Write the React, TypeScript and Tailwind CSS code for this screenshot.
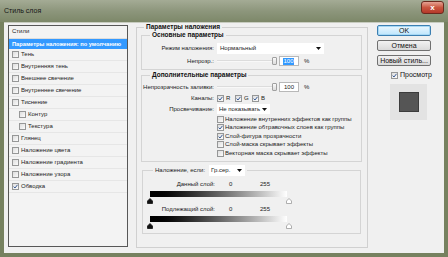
import React from "react";

function Cb({ checked }: { checked?: boolean }) {
  return (
    <span className="inline-flex w-[7px] h-[7px] shrink-0 border border-[#969797] bg-linear-to-br from-[#dedede] to-[#fbfbfb] items-center justify-center">
      {checked && (
        <svg viewBox="0 0 5 5" className="w-[5px] h-[5px]">
          <path d="M0.6 2.6 L2 4 L4.5 0.8" stroke="#3a5c96" strokeWidth="1" fill="none" />
        </svg>
      )}
    </span>
  );
}

function ListItem({ label, checked, indent }: { label: string; checked?: boolean; indent?: boolean }) {
  return (
    <div className={"flex items-center h-[12px] border-b border-[#e6e6e6] gap-[2px] " + (indent ? "pl-[10px]" : "pl-[3px]")}>
      <Cb checked={checked} />
      <span className="text-[6px] leading-[7px] text-[#222]">{label}</span>
    </div>
  );
}

function Arrow() {
  return (
    <svg viewBox="0 0 5 3" className="w-[5px] h-[3px]">
      <path d="M0 0 L5 0 L2.5 3 Z" fill="#111" />
    </svg>
  );
}

function Slider() {
  return (
    <div className="flex items-center">
      <div className="w-[55px] h-[2px] bg-[#dcdcdc] border-b border-[#f8f8f8]" />
      <div className="w-[5px] h-[8px] border border-[#a0a0a0] rounded-[1px] bg-linear-to-b from-[#fafafa] to-[#dcdcdc]" />
    </div>
  );
}

function House({ dark }: { dark?: boolean }) {
  return (
    <svg viewBox="0 0 6 6" className="w-[6px] h-[6px]">
      <path
        d="M3 0.5 L5.5 3 L5.5 5.5 L0.5 5.5 L0.5 3 Z"
        fill={dark ? "#111" : "#fff"}
        stroke={dark ? "#111" : "#9a9a9a"}
        strokeWidth="0.8"
      />
    </svg>
  );
}

function Btn({ children, def }: { children: React.ReactNode; def?: boolean }) {
  return (
    <div
      className={
        "h-[11px] flex items-center justify-center rounded-[2px] border text-[7px] leading-[8px] text-[#111] bg-linear-to-b " +
        (def
          ? "border-[#3c7fb1] from-[#eaf6fd] to-[#bee6fd] shadow-[inset_0_0_0_1px_#a6d8f5]"
          : "border-[#707070] from-[#f2f2f2] to-[#dadada]")
      }
    >
      {children}
    </div>
  );
}

export default function App() {
  return (
    <div className="w-[448px] h-[257px] flex flex-col bg-[#76815f] font-['Liberation_Sans',Arial,sans-serif] overflow-hidden">
      {/* title bar */}
      <div className="h-[22px] shrink-0 flex items-start bg-linear-to-b from-[#a4ab95] via-[#8d967c] to-[#7d8869]">
        <span className="ml-[4px] mt-[7px] text-[7px] leading-[8px] text-[#151515]">Стиль слоя</span>
        <div className="ml-auto mr-[4px] mt-[1px] w-[23px] h-[13px] rounded-[3px] border border-[#6b2a1e] bg-linear-to-b from-[#e5a293] via-[#c9563f] to-[#b5382a] flex items-center justify-center">
          <span className="text-white text-[8px] leading-[8px] font-bold">x</span>
        </div>
      </div>

      {/* client */}
      <div className="mx-[4px] mb-[4px] flex-1 bg-[#f0f0f0] flex items-start pl-[4px] border-t border-[#c8ccc0]">
        {/* left list */}
        <div className="mt-[2px] w-[120px] h-[222px] shrink-0 border border-[#575757] bg-[#f3f3f3] flex flex-col">
          <div className="h-[13px] pl-[3px] pt-[2px] text-[6px] leading-[7px] text-[#222] border-b border-[#dcdcdc]">Стили</div>
          <div className="h-[10px] bg-[#3399ff] flex items-center pl-[3px] text-[5.7px] leading-[7px] font-bold text-white whitespace-nowrap overflow-hidden">
            Параметры наложения: по умолчанию
          </div>
          <ListItem label="Тень" />
          <ListItem label="Внутренняя тень" />
          <ListItem label="Внешнее свечение" />
          <ListItem label="Внутреннее свечение" />
          <ListItem label="Тиснение" />
          <ListItem label="Контур" indent />
          <ListItem label="Текстура" indent />
          <ListItem label="Глянец" />
          <ListItem label="Наложение цвета" />
          <ListItem label="Наложение градиента" />
          <ListItem label="Наложение узора" />
          <ListItem label="Обводка" checked />
        </div>

        {/* middle */}
        <fieldset className="ml-[8px] w-[232px] h-[225px] shrink-0 border border-[#d0d0d0] px-[4px] text-[6px] leading-[7px] text-[#1a1a1a]">
          <legend className="ml-[3px] px-[2px] text-[6.5px] leading-[8px] font-bold text-[#111]">Параметры наложения</legend>

          {/* Основные */}
          <fieldset className="w-[221px] border border-[#d4d4d4] pb-[3px]">
            <legend className="ml-[8px] px-[2px] text-[6.5px] leading-[8px] font-bold text-[#111]">Основные параметры</legend>
            <div className="flex items-center h-[11px] mt-[4px]">
              <span className="w-[75px] text-right pr-[3px]">Режим наложения:</span>
              <div className="w-[107px] h-[11px] bg-white flex items-center justify-between pl-[3px] pr-[3px]">
                <span>Нормальный</span>
                <Arrow />
              </div>
            </div>
            <div className="flex items-center h-[10px] mt-[2px]">
              <span className="w-[75px] text-right pr-[3px]">Непрозр.:</span>
              <Slider />
              <div className="ml-[2px] w-[20px] h-[10px] bg-white border border-[#b8b8b8] flex items-center pl-[3px]">
                <span className="bg-[#3399ff] text-white px-[0.5px]">100</span>
              </div>
              <span className="ml-[5px]">%</span>
            </div>
          </fieldset>

          {/* Дополнительные */}
          <fieldset className="mt-[1px] w-[221px] border border-[#d4d4d4] pb-[3px]">
            <legend className="ml-[8px] px-[2px] text-[6.5px] leading-[8px] font-bold text-[#111]">Дополнительные параметры</legend>
            <div className="flex items-center h-[10px] mt-[3px]">
              <span className="w-[75px] text-right pr-[3px] whitespace-nowrap">Непрозрачность заливки:</span>
              <Slider />
              <div className="ml-[2px] w-[20px] h-[10px] bg-white border border-[#b8b8b8] flex items-center pl-[4px]">
                <span>100</span>
              </div>
              <span className="ml-[5px]">%</span>
            </div>
            <div className="flex items-center h-[9px] mt-[2px]">
              <span className="w-[75px] text-right pr-[3px]">Каналы:</span>
              <div className="flex items-center gap-[2px] w-[18px]"><Cb checked /><span>R</span></div>
              <div className="flex items-center gap-[2px] w-[17px]"><Cb checked /><span>G</span></div>
              <div className="flex items-center gap-[2px]"><Cb checked /><span>B</span></div>
            </div>
            <div className="flex items-center h-[10px] mt-[1px]">
              <span className="w-[75px] text-right pr-[3px]">Просвечивание:</span>
              <div className="w-[53px] h-[10px] bg-white flex items-center justify-between pl-[2px] pr-[3px]">
                <span>Не показывать</span>
                <Arrow />
              </div>
            </div>
            <div className="ml-[75px] mt-[1px] flex flex-col">
              {[
                ["Наложение внутренних эффектов как группы", false],
                ["Наложение обтравочных слоев как группы", true],
                ["Слой-фигура прозрачности", true],
                ["Слой-маска скрывает эффекты", false],
                ["Векторная маска скрывает эффекты", false],
              ].map(([t, c]) => (
                <div key={t as string} className="flex items-center gap-[1px] h-[8.5px] whitespace-nowrap">
                  <Cb checked={c as boolean} />
                  <span>{t as string}</span>
                </div>
              ))}
            </div>
          </fieldset>

          {/* Наложение, если */}
          <fieldset className="mt-[3px] ml-[1px] w-[219px] border border-[#d4d4d4] pb-[4px]">
            <legend className="ml-[10px] px-[2px] flex items-center gap-[4px] whitespace-nowrap">
              <span>Наложение, если:</span>
              <div className="w-[36px] h-[11px] bg-white flex items-center justify-between pl-[2px] pr-[3px]">
                <span>Гр.сер.</span>
                <Arrow />
              </div>
            </legend>
            <div className="flex items-center h-[8px] mt-[5px]">
              <span className="w-[73px] text-right pr-[1px]">Данный слой:</span>
              <span className="ml-[13px] w-[31px]">0</span>
              <span>255</span>
            </div>
            <div className="ml-[7px] mt-[2px] w-[137px] h-[6px] bg-linear-to-r from-black to-white" />
            <div className="ml-[4px] mt-[1px] w-[145px] flex justify-between">
              <House dark />
              <House />
            </div>
            <div className="flex items-center h-[8px] mt-[2px]">
              <span className="w-[73px] text-right pr-[1px]">Подлежащий слой:</span>
              <span className="ml-[13px] w-[31px]">0</span>
              <span>255</span>
            </div>
            <div className="ml-[7px] mt-[2px] w-[137px] h-[6px] bg-linear-to-r from-black to-white" />
            <div className="ml-[4px] mt-[1px] w-[145px] flex justify-between">
              <House dark />
              <House />
            </div>
          </fieldset>
        </fieldset>

        {/* right column */}
        <div className="ml-[9px] mt-[2px] w-[54px] shrink-0 flex flex-col gap-[4px]">
          <Btn def>OK</Btn>
          <Btn>Отмена</Btn>
          <Btn>Новый стиль...</Btn>
          <div className="ml-[14px] mt-[1px] flex items-center gap-[2px] text-[7px] leading-[8px] text-[#111]">
            <Cb checked />
            <span>Просмотр</span>
          </div>
          <div className="ml-[13px] mt-[1px] w-[37px] h-[36px] bg-[#e3e3e3] flex items-center justify-center">
            <div className="w-[20px] h-[20px] bg-[#555] border border-[#3c3c3c]" />
          </div>
        </div>
      </div>
    </div>
  );
}
